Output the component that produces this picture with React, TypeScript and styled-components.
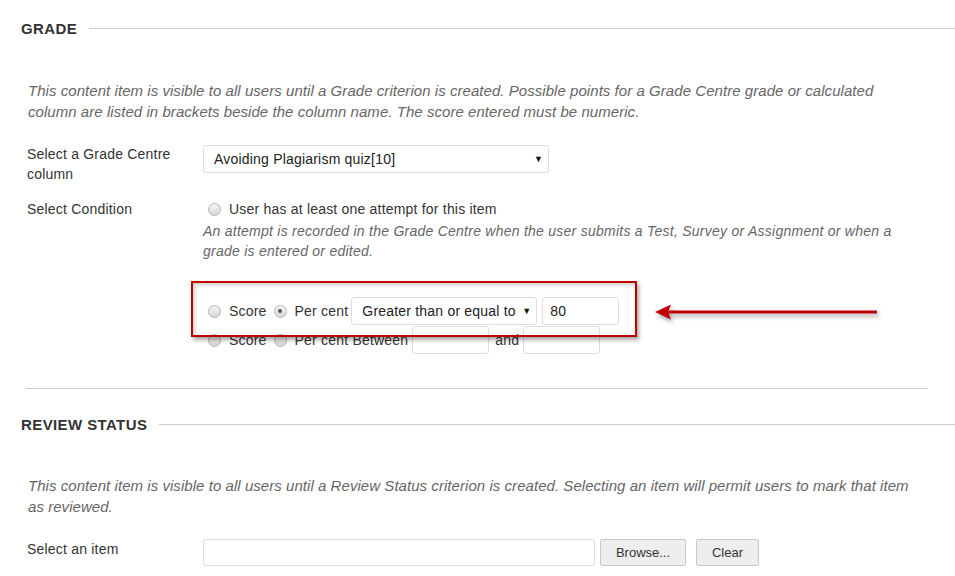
import styled, { createGlobalStyle } from "styled-components";

const GlobalStyle = createGlobalStyle`
  html, body {
    margin: 0;
    padding: 0;
    background: #fff;
  }
  body {
    font-family: "Liberation Sans", Arial, sans-serif;
    font-size: 14px;
    letter-spacing: 0.2px;
    color: #333;
  }
`;

export default function App() {
  return (
    <>
      <GlobalStyle />
      <Page>
        <SectionHeading $top={19}>
          <Title>GRADE</Title>
          <Rule />
        </SectionHeading>
        <Body>
          <Description $top={41}>
            This content item is visible to all users until a Grade criterion is created. Possible points for a Grade
            Centre grade or calculated column are listed in brackets beside the column name. The score entered must be
            numeric.
          </Description>

          <FieldRow $top={22}>
            <Label>Select a Grade Centre column</Label>
            <div>
              <Select $width={346} $top={1}>
                <span>Avoiding Plagiarism quiz[10]</span>
                <Caret>▼</Caret>
              </Select>
            </div>
          </FieldRow>

          <FieldRow $top={15}>
            <Label>Select Condition</Label>
            <div>
              <RadioLine>
                <Radio />
                <span>User has at least one attempt for this item</span>
              </RadioLine>
              <Note>
                An attempt is recorded in the Grade Centre when the user submits a Test, Survey or Assignment or when a
                grade is entered or edited.
              </Note>
              <Options>
                <OptionRow>
                  <Radio />
                  <OptionText>Score</OptionText>
                  <Radio $checked $left={7} />
                  <OptionText>Per cent</OptionText>
                  <Select $width={186} $left={3}>
                    <span>Greater than or equal to</span>
                    <Caret>▼</Caret>
                  </Select>
                  <TextInput $width={77} $left={5}>80</TextInput>
                </OptionRow>
                <OptionRow>
                  <Radio />
                  <OptionText>Score</OptionText>
                  <Radio $left={7} />
                  <OptionText>Per cent Between</OptionText>
                  <TextInput $width={77} $left={4} />
                  <OptionText $left={6}>and</OptionText>
                  <TextInput $width={77} $left={4} />
                </OptionRow>
                <Highlight />
                <Arrow viewBox="0 0 226 20" width={226} height={20}>
                  <line x1="12" y1="8" x2="222" y2="8" stroke="#c00000" strokeWidth="3.2" />
                  <path d="M0 8 L16 0.5 L13 8 L16 15.5 Z" fill="#c00000" />
                </Arrow>
              </Options>
            </div>
          </FieldRow>

          <Divider />
        </Body>

        <SectionHeading $top={26}>
          <Title>REVIEW STATUS</Title>
          <Rule />
        </SectionHeading>
        <Body>
          <Description $top={40}>
            This content item is visible to all users until a Review Status criterion is created. Selecting an item will
            permit users to mark that item as reviewed.
          </Description>
          <FieldRow $top={22}>
            <Label>Select an item</Label>
            <ItemPicker>
              <TextInput $width={392} $height={27} />
              <Button $width={86} $left={5}>Browse...</Button>
              <Button $width={63} $left={10}>Clear</Button>
            </ItemPicker>
          </FieldRow>
        </Body>
      </Page>
    </>
  );
}

const Page = styled.div`
  width: 955px;
  box-sizing: border-box;
  padding-left: 21px;
  overflow: hidden;
`;

const SectionHeading = styled.div<{ $top: number }>`
  display: flex;
  align-items: center;
  gap: 12px;
  margin-top: ${(p) => p.$top}px;
  height: 20px;
`;

const Title = styled.h2`
  margin: 0;
  font-size: 15px;
  font-weight: bold;
  letter-spacing: 0.4px;
  line-height: 20px;
  color: #333;
  white-space: nowrap;
`;

const Rule = styled.div`
  flex: 1;
  height: 1px;
  margin-top: -2px;
  background: #ccc;
`;

const Body = styled.div`
  margin-left: 6px;
  margin-right: 27px;
`;

const Description = styled.p<{ $top: number }>`
  margin: ${(p) => p.$top}px 0 0 1px;
  max-width: 888px;
  font-size: 15px;
  font-style: italic;
  letter-spacing: 0.05px;
  line-height: 21px;
  color: #666;
`;

const FieldRow = styled.div<{ $top: number }>`
  display: grid;
  grid-template-columns: 176px 1fr;
  margin-top: ${(p) => p.$top}px;
`;

const Label = styled.div`
  line-height: 20px;
  color: #333;
  padding-right: 20px;
`;

const Select = styled.div<{ $width: number; $left?: number; $top?: number }>`
  display: flex;
  align-items: center;
  justify-content: space-between;
  box-sizing: border-box;
  width: ${(p) => p.$width}px;
  height: 28px;
  margin-left: ${(p) => p.$left ?? 0}px;
  margin-top: ${(p) => p.$top ?? 0}px;
  padding: 0 5px 0 10px;
  border: 1px solid #ddd;
  border-radius: 3px;
  background: #fff;
  color: #222;
  white-space: nowrap;
`;

const Caret = styled.span`
  font-size: 9px;
  color: #111;
`;

const RadioLine = styled.div`
  display: flex;
  align-items: center;
  line-height: 20px;
`;

const Radio = styled.span<{ $checked?: boolean; $left?: number }>`
  position: relative;
  flex: none;
  box-sizing: border-box;
  width: 13px;
  height: 13px;
  margin: 1px 8px 0 ${(p) => p.$left ?? 5}px;
  border-radius: 50%;
  border: 1px solid #b4b4b4;
  background: linear-gradient(#f6f6f6, #d6d6d6);

  &::after {
    content: "";
    display: ${(p) => (p.$checked ? "block" : "none")};
    position: absolute;
    left: 3.5px;
    top: 3.5px;
    width: 4px;
    height: 4px;
    border-radius: 50%;
    background: #555;
  }
`;

const Note = styled.p`
  margin: 2px 0 0;
  max-width: 712px;
  font-style: italic;
  letter-spacing: 0.25px;
  line-height: 20px;
  color: #666;
`;

const Options = styled.div`
  position: relative;
  margin-top: 35px;
`;

const OptionRow = styled.div`
  display: flex;
  align-items: center;
  height: 29px;
`;

const OptionText = styled.span<{ $left?: number }>`
  margin-left: ${(p) => p.$left ?? 0}px;
  color: #333;
  white-space: nowrap;
`;

const TextInput = styled.div<{ $width: number; $left?: number; $height?: number }>`
  display: flex;
  align-items: center;
  box-sizing: border-box;
  width: ${(p) => p.$width}px;
  height: ${(p) => p.$height ?? 28}px;
  margin-left: ${(p) => p.$left ?? 0}px;
  padding: 0 7px;
  border: 1px solid #ddd;
  border-radius: 3px;
  background: #fff;
  color: #222;
`;

const Highlight = styled.div`
  position: absolute;
  left: -12px;
  top: -15px;
  width: 446px;
  height: 56px;
  box-sizing: border-box;
  border: 2px solid #c00000;
  box-shadow: 2px 3px 4px rgba(0, 0, 0, 0.35), inset 2px 2px 4px rgba(0, 0, 0, 0.2);
  pointer-events: none;
`;

const Arrow = styled.svg`
  position: absolute;
  left: 452px;
  top: 8px;
  overflow: visible;
  filter: drop-shadow(2px 3px 2px rgba(0, 0, 0, 0.35));
`;

const Divider = styled.div`
  height: 1px;
  margin: 34px 0 0 -1px;
  background: #ccc;
`;

const ItemPicker = styled.div`
  display: flex;
  align-items: center;
`;

const Button = styled.div<{ $width: number; $left: number }>`
  display: flex;
  align-items: center;
  justify-content: center;
  box-sizing: border-box;
  width: ${(p) => p.$width}px;
  height: 27px;
  margin-left: ${(p) => p.$left}px;
  border: 1px solid #c8c8c8;
  border-radius: 2px;
  background: #eee;
  color: #333;
  font-size: 13px;
  letter-spacing: 0;
`;
